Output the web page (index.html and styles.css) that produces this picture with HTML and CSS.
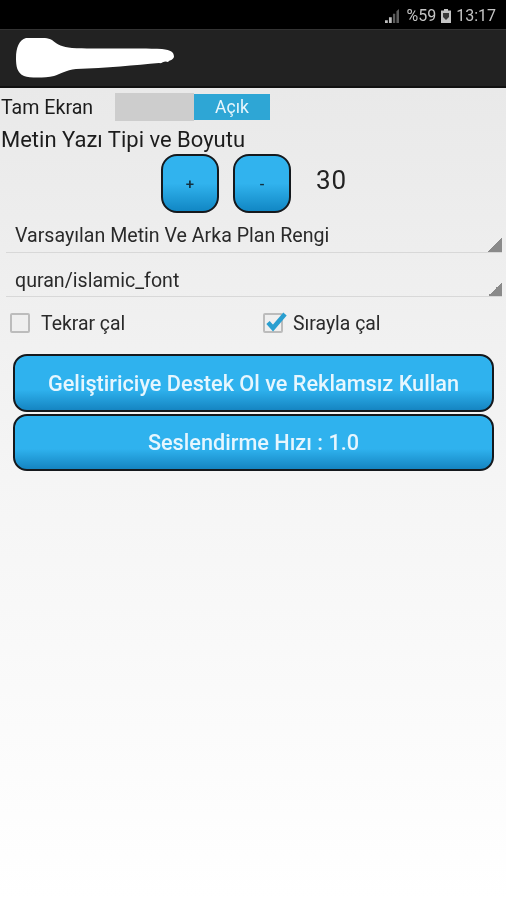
FILE: index.html
```html
<!DOCTYPE html>
<html lang="tr">
<head>
<meta charset="utf-8">
<title>Ayarlar</title>
<link rel="stylesheet" href="styles.css">
</head>
<body>
<div class="screen">
  <header class="status">
    <svg class="signal" viewBox="0 0 12 12" width="14" height="14"><path d="M0 12h2.4v-2.4H0zM3.4 12h2.4V7H3.4z" fill="#bdbdbd"/><path d="M6.8 12h2V4h-2zM9.8 12H12V0L9.8 2z" fill="#5c5c5c"/></svg>
    <span class="status-text">%59</span>
    <svg class="battery" viewBox="0 0 10 14" width="10" height="14"><path d="M3 0h4v1.5h3V14H0V1.5h3z" fill="#c4c4c4"/><path d="M2 4h6v4L5 11 2 8z" fill="#3a3a3a"/></svg>
    <span class="status-text">13:17</span>
  </header>
  <div class="appbar">
    <svg class="blob" viewBox="0 0 160 40" width="160" height="40"><path d="M10 0C18-1 30-1 36 2 42 7 46 9 56 10 80 11 120 10 146 11 155 12 158 14 158 19 156 23 155 21 152 24 148 22 146 26 143 25 120 27 90 30 60 31 50 32 44 36 38 38 28 40 14 40 8 38 1 35 0 28 0 20 0 10 3 2 10 0Z" fill="#fff"/></svg>
  </div>
  <main class="content">
    <div class="toggle-row">
      <span class="label toggle-label">Tam Ekran</span>
      <div class="toggle"><span class="toggle-off"></span><span class="toggle-on">Açık</span></div>
    </div>
    <div class="title">Metin Yazı Tipi ve Boyutu</div>
    <div class="size-row">
      <button class="size-btn">+</button>
      <button class="size-btn">-</button>
      <span class="size-value">30</span>
    </div>
    <div class="spinner first"><span>Varsayılan Metin Ve Arka Plan Rengi</span><i class="arrow"></i></div>
    <div class="spinner second"><span>quran/islamic_font</span><i class="arrow"></i></div>
    <div class="checks">
      <div class="check c1"><span class="box"></span><span>Tekrar çal</span></div>
      <div class="check c2">
        <span class="box"><svg class="tick" viewBox="0 0 26 26" width="26" height="26"><path d="M6 14.5l5 5.5L23 6" fill="none" stroke="#2a9fd0" stroke-width="4.5"/></svg></span>
        <span>Sırayla çal</span>
      </div>
    </div>
    <button class="wide-btn">Geliştiriciye Destek Ol ve Reklamsız Kullan</button>
    <button class="wide-btn">Seslendirme Hızı : 1.0</button>
  </main>
</div>
</body>
</html>
```
FILE: styles.css
```css
* { box-sizing: border-box; }
html, body { margin: 0; padding: 0; height: 100%; }
body { font-family: Roboto, "Liberation Sans", sans-serif; background: #fff; overflow: hidden; }
.screen { width: 506px; height: 900px; display: flex; flex-direction: column; filter: blur(0.5px); }

.status { height: 29px; background: #000; display: flex; align-items: center; justify-content: flex-end; padding: 2px 10px 0 0; gap: 5px; }
.status-text { color: #c4c4c4; font-size: 16px; }
.signal { margin-right: 2px; }

.appbar { height: 59px; background: #222; border-top: 1px solid #333; border-bottom: 2px solid #111; display: flex; align-items: center; padding: 0 0 0 16px; }
.blob { display: block; margin-top: -1px; }

.content { flex: 1; background: linear-gradient(#e9e9e9 0, #f5f5f5 48%, #fff 100%); padding-top: 4px; display: flex; flex-direction: column; color: #1c1c1c; }
.label { font-size: 19.6px; }
.toggle-row { height: 29px; display: flex; align-items: center; }
.toggle-label { width: 115px; padding-left: 1px; margin-top: 1px; white-space: nowrap; }
.toggle { width: 155px; height: 28px; display: flex; }
.toggle-off { width: 79px; background: #cdcdcd; }
.toggle-on { flex: 1; margin: 1px 0; background: #2ea6d5; color: #e8f6fc; font-size: 17.5px; display: flex; align-items: center; justify-content: center; }
.title { font-size: 22px; padding-left: 1px; margin-top: 7px; height: 26px; line-height: 24px; white-space: nowrap; }

.size-row { display: flex; height: 59px; padding-left: 161px; gap: 14px; }
.size-btn { width: 58px; height: 59px; padding: 0; border: 2px solid #15191d; border-radius: 16px; background: linear-gradient(#31b3ee 0, #31b3ee 50%, #1187c4 100%); color: #13303f; font: 500 15px Roboto, sans-serif; }
.size-value { font-size: 26px; color: #222; margin-left: 11px; margin-top: 9px; line-height: 34px; letter-spacing: 1px; }

.spinner { position: relative; margin: 0 4px 0 6px; border-bottom: 1px solid #d8d8d8; font-size: 19.6px; color: #2a2a2a; padding-left: 9px; white-space: nowrap; }
.spinner.first { height: 40px; padding-top: 11px; line-height: 24px; }
.spinner.second { height: 44px; padding-top: 16px; line-height: 24px; }
.arrow { position: absolute; right: 0; bottom: 0; width: 14px; height: 14px; background: linear-gradient(135deg, transparent 50%, #8a8a8a 50%); }

.checks { display: flex; height: 36px; margin-top: 9px; align-items: flex-start; font-size: 19.4px; color: #2a2a2a; padding-top: 6px; }
.check { display: flex; align-items: center; height: 22px; white-space: nowrap; }
.c1 { width: 263px; padding-left: 10px; gap: 11px; }
.c2 { gap: 10px; }
.box { position: relative; width: 20px; height: 20px; border: 2px solid #bcbcbc; border-radius: 2px; background: #efefef; display: block; }
.tick { position: absolute; left: -3px; top: -7px; }

.wide-btn { display: block; width: 481px; height: 58px; margin: 0 0 2px 13px; padding: 0; border: 2px solid #15191d; border-radius: 14px; background: linear-gradient(#2fb2ee 0, #2fb2ee 62%, #1585c2 100%); color: #e6f6fe; font: 500 21.7px Roboto, sans-serif; }
.checks + .wide-btn { margin-top: 12px; }
.wide-btn + .wide-btn { height: 57px; margin-top: 0; }
```
